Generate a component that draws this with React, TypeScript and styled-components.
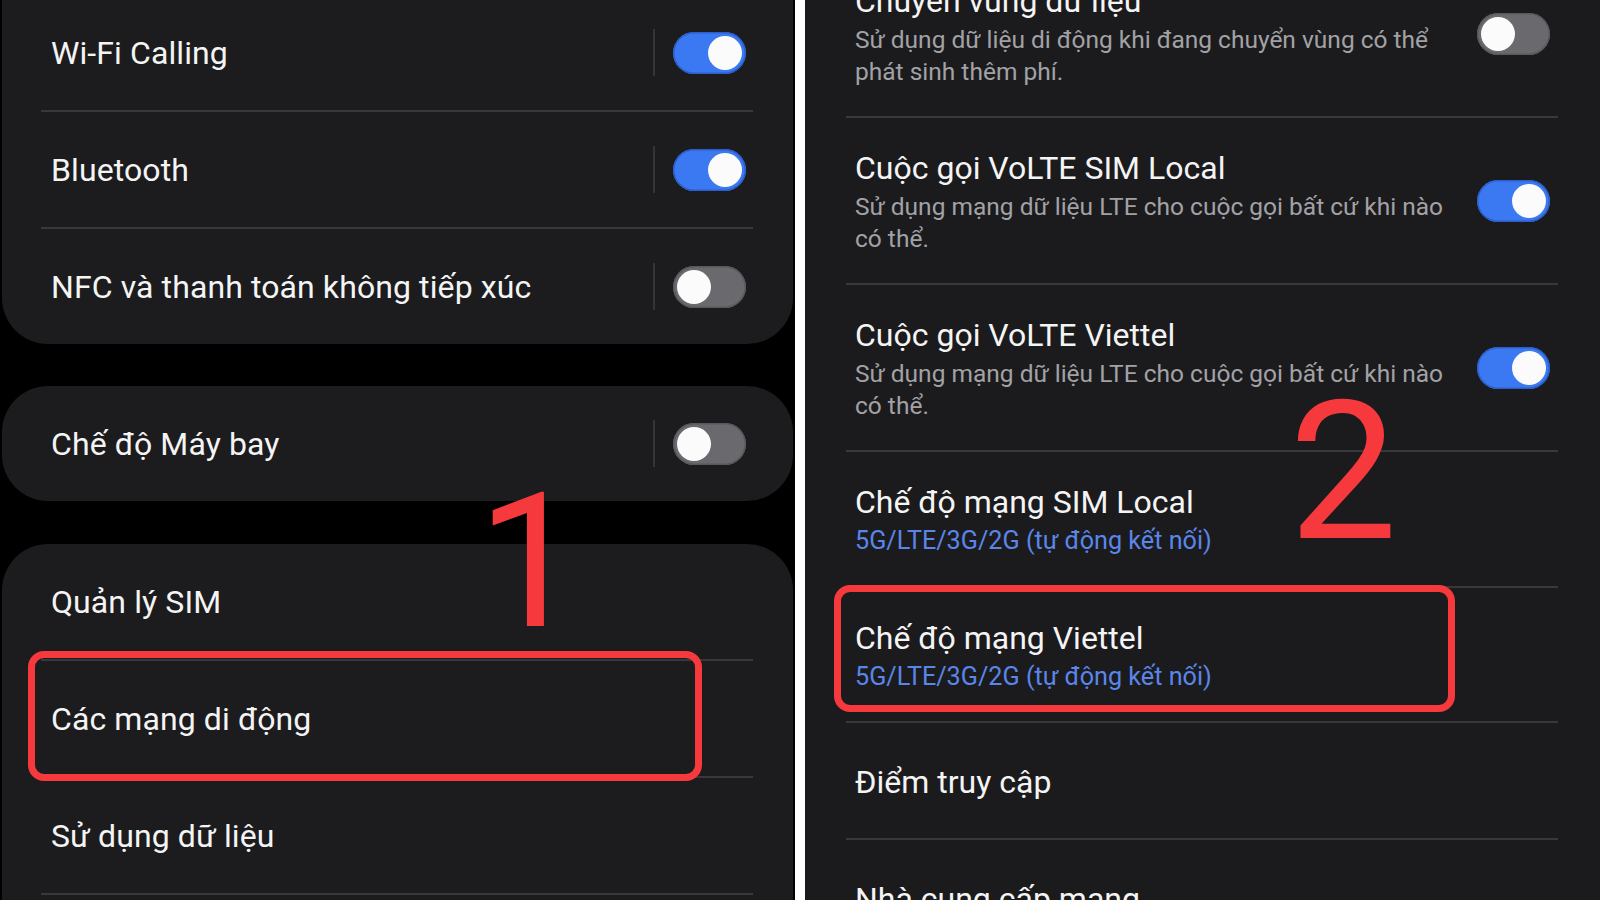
import React from 'react';
import styled, { createGlobalStyle } from 'styled-components';

const GlobalStyle = createGlobalStyle`
  html, body {
    margin: 0;
    padding: 0;
    background: #000;
  }
  body {
    font-family: Roboto, "Noto Sans", "Liberation Sans", sans-serif;
    -webkit-font-smoothing: antialiased;
  }
`;

const Screen = styled.div`
  display: flex;
  width: 1600px;
  height: 900px;
  overflow: hidden;
`;

const LeftPane = styled.div`
  position: relative;
  flex: 0 0 795px;
  display: flex;
  flex-direction: column;
  gap: 42px;
  padding: 0 2px;
  box-sizing: border-box;
  background: #000;
  overflow: hidden;
`;

const Gutter = styled.div`
  flex: 0 0 10px;
  background: #fff;
`;

const RightPane = styled.div`
  position: relative;
  flex: 1;
  background: #1b1b1d;
  overflow: hidden;
`;

// cards that run past the screen edge get extra padding on that side
const Card = styled.div<{ $shift?: number; $bleedTop?: number; $bleedBottom?: number }>`
  flex: none;
  background: #1c1c1e;
  border-radius: 46px;
  margin-top: ${(p) => (p.$shift || 0) - (p.$bleedTop || 0)}px;
  padding-top: ${(p) => p.$bleedTop || 0}px;
  padding-bottom: ${(p) => p.$bleedBottom || 0}px;
`;

const Divider = styled.div`
  height: 2px;
  background: #38383a;
  margin: 0 40px 0 39px;
`;

const Row = styled.div`
  display: flex;
  align-items: center;
  height: 115px;
  padding: 0 47px 0 49px;
`;

const Label = styled.div`
  flex: 1;
  color: #f4f4f4;
  font-size: 32px;
  line-height: 38px;
  letter-spacing: 0.1px;
  white-space: nowrap;
`;

const VLine = styled.div`
  width: 2px;
  height: 47px;
  background: #353537;
  margin-right: 18px;
`;

const Track = styled.div<{ $on: boolean }>`
  display: flex;
  align-items: center;
  justify-content: ${(p) => (p.$on ? 'flex-end' : 'flex-start')};
  width: 73px;
  height: 42px;
  padding: 0 4px;
  box-sizing: border-box;
  border-radius: 21px;
  background: ${(p) => (p.$on ? '#3b79f2' : '#6a6a6e')};
  box-shadow: inset 0 0 0 1.5px ${(p) => (p.$on ? '#2c5fcc' : '#59595d')};
  flex: none;
`;

const Knob = styled.div`
  width: 34px;
  height: 34px;
  border-radius: 50%;
  background: #fbfbfb;
`;

const List = styled.div`
  margin-top: -49px;
`;

const Item = styled.div`
  display: flex;
  align-items: center;
  min-height: 115px;
  padding: 0 50px;
  box-sizing: border-box;
`;

const ItemText = styled.div`
  flex: 1;
  padding: 31px 0 29px;
`;

const Title = styled.div`
  color: #f4f4f4;
  font-size: 32px;
  line-height: 38px;
  white-space: nowrap;
`;

const SubBlock = styled.div`
  margin-top: 4px;
`;

const Sub = styled.div<{ $accent?: boolean }>`
  color: ${(p) => (p.$accent ? '#5a86e9' : '#a2a2a6')};
  font-size: ${(p) => (p.$accent ? 25.2 : 24.5)}px;
  line-height: 31.5px;
  white-space: nowrap;
`;

const ListDivider = styled.div`
  height: 2px;
  background: #38383a;
  margin: 0 42px 0 41px;
`;

const Highlight = styled.div<{ $x: number; $y: number; $w: number; $h: number }>`
  position: absolute;
  left: ${(p) => p.$x}px;
  top: ${(p) => p.$y}px;
  width: ${(p) => p.$w}px;
  height: ${(p) => p.$h}px;
  box-sizing: border-box;
  border: 7px solid #f6393d;
  border-radius: 16px;
  pointer-events: none;
`;

const StepNumber = styled.div<{ $x: number; $y: number; $size: number }>`
  position: absolute;
  left: ${(p) => p.$x}px;
  top: ${(p) => p.$y}px;
  font-family: Roboto, sans-serif;
  font-size: ${(p) => p.$size}px;
  line-height: 1;
  color: #f6393d;
`;

const Toggle = ({ on }: { on: boolean }) => (
  <Track $on={on}>
    <Knob />
  </Track>
);

type Setting = { label: string; toggle?: boolean };

const SettingRow = ({ label, toggle }: Setting) => (
  <Row>
    <Label>{label}</Label>
    {toggle !== undefined && (
      <>
        <VLine />
        <Toggle on={toggle} />
      </>
    )}
  </Row>
);

type NetItem = { title: string; sub?: string[]; accent?: boolean; toggle?: boolean };

const netItems: NetItem[] = [
  {
    title: 'Chuyển vùng dữ liệu',
    sub: ['Sử dụng dữ liệu di động khi đang chuyển vùng có thể', 'phát sinh thêm phí.'],
    toggle: false,
  },
  {
    title: 'Cuộc gọi VoLTE SIM Local',
    sub: ['Sử dụng mạng dữ liệu LTE cho cuộc gọi bất cứ khi nào', 'có thể.'],
    toggle: true,
  },
  {
    title: 'Cuộc gọi VoLTE Viettel',
    sub: ['Sử dụng mạng dữ liệu LTE cho cuộc gọi bất cứ khi nào', 'có thể.'],
    toggle: true,
  },
  { title: 'Chế độ mạng SIM Local', sub: ['5G/LTE/3G/2G (tự động kết nối)'], accent: true },
  { title: 'Chế độ mạng Viettel', sub: ['5G/LTE/3G/2G (tự động kết nối)'], accent: true },
  { title: 'Điểm truy cập' },
  { title: 'Nhà cung cấp mạng' },
];

export default function App() {
  return (
    <>
      <GlobalStyle />
      <Screen>
        <LeftPane>
          <Card $shift={-5} $bleedTop={60}>
            <SettingRow label="Wi-Fi Calling" toggle />
            <Divider />
            <SettingRow label="Bluetooth" toggle />
            <Divider />
            <SettingRow label="NFC và thanh toán không tiếp xúc" toggle={false} />
          </Card>
          <Card>
            <SettingRow label="Chế độ Máy bay" toggle={false} />
          </Card>
          <Card $shift={1} $bleedBottom={80}>
            <SettingRow label="Quản lý SIM" />
            <Divider />
            <SettingRow label="Các mạng di động" />
            <Divider />
            <SettingRow label="Sử dụng dữ liệu" />
            <Divider />
          </Card>
          <StepNumber $x={477} $y={468} $size={188}>
            1
          </StepNumber>
          <Highlight $x={28} $y={651} $w={674} $h={130} />
        </LeftPane>
        <Gutter />
        <RightPane>
          <List>
            {netItems.map((it, i) => (
              <React.Fragment key={it.title}>
                {i > 0 && <ListDivider />}
                <Item>
                  <ItemText>
                    <Title>{it.title}</Title>
                    {it.sub && (
                      <SubBlock>
                        {it.sub.map((line) => (
                          <Sub key={line} $accent={it.accent}>
                            {line}
                          </Sub>
                        ))}
                      </SubBlock>
                    )}
                  </ItemText>
                  {it.toggle !== undefined && <Toggle on={it.toggle} />}
                </Item>
              </React.Fragment>
            ))}
          </List>
          <StepNumber $x={484} $y={376} $size={193}>
            2
          </StepNumber>
          <Highlight $x={29} $y={585} $w={621} $h={127} />
        </RightPane>
      </Screen>
    </>
  );
}
